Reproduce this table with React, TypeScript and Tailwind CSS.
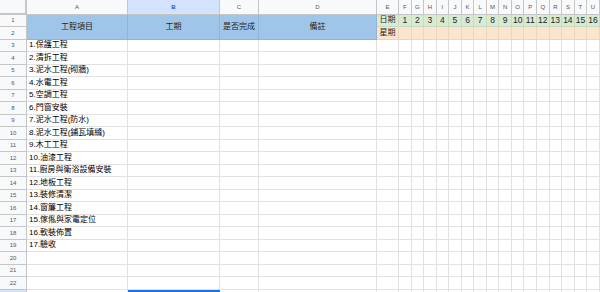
import React from "react";

const items = [
  "1.保護工程",
  "2.清拆工程",
  "3.泥水工程(砌牆)",
  "4.水電工程",
  "5.空調工程",
  "6.門窗安裝",
  "7.泥水工程(防水)",
  "8.泥水工程(鋪瓦填縫)",
  "9.木工工程",
  "10.油漆工程",
  "11.廚房與衛浴設備安裝",
  "12.地板工程",
  "13.裝修清潔",
  "14.窗簾工程",
  "15.傢俬與家電定位",
  "16.軟裝佈置",
  "17.驗收",
];

const dayCols = ["F", "G", "H", "I", "J", "K", "L", "M", "N", "O", "P", "Q", "R", "S", "T", "U"];

const font = { fontFamily: '"Liberation Sans", Arial, "Noto Sans CJK TC", sans-serif' };

export default function App() {
  const rows: React.ReactNode[] = [];

  rows.push(
    <div key="corner" className="bg-[#f8f9fa] border-r-2 border-b-2 border-[#c4c7c5]" />
  );
  const colHeads = ["A", "B", "C", "D", "E", ...dayCols];
  colHeads.forEach((c) => {
    const sel = c === "B";
    rows.push(
      <div
        key={"h" + c}
        className={
          "flex items-center justify-center text-[6px] border-r border-b border-[#c4c7c5] " +
          (sel ? "bg-[#d3e3fd] text-[#0b57d0] font-bold" : "bg-[#f8f9fa] text-[#575757]")
        }
      >
        {c}
      </div>
    );
  });

  rows.push(
    <div key="r1" className="flex items-center justify-center text-[6px] text-[#575757] bg-[#f8f9fa] border-r border-b border-[#c4c7c5]">1</div>
  );
  const blueCell =
    "row-span-2 flex items-center justify-center bg-[#9fc5e8] text-[8px] text-[#1f1f1f] border-r border-b border-[#8fb4d8]";
  rows.push(<div key="a1" className={blueCell}>工程項目</div>);
  rows.push(<div key="b1" className={blueCell}>工期</div>);
  rows.push(<div key="c1" className={blueCell}>是否完成</div>);
  rows.push(<div key="d1" className={blueCell}>備註</div>);
  rows.push(
    <div key="e1" className="flex items-center justify-center bg-[#d9ead3] text-[8px] text-[#1f1f1f] border-r border-b border-[#c9dcc2]">日期</div>
  );
  dayCols.forEach((c, i) => {
    rows.push(
      <div key={"d" + c} className="flex items-center justify-center bg-[#d9ead3] text-[8.5px] text-[#1f1f1f] border-r border-b border-[#c9dcc2]">
        {i + 1}
      </div>
    );
  });

  rows.push(
    <div key="r2" className="flex items-center justify-center text-[6px] text-[#575757] bg-[#f8f9fa] border-r border-b border-[#c4c7c5]">2</div>
  );
  rows.push(
    <div key="e2" className="flex items-center justify-center bg-[#fce5cd] text-[8px] text-[#1f1f1f] border-r border-b border-[#ecd4bb]">星期</div>
  );
  dayCols.forEach((c) => {
    rows.push(<div key={"w" + c} className="bg-[#fce5cd] border-r border-b border-[#ecd4bb]" />);
  });

  for (let r = 3; r <= 23; r++) {
    const sel = r === 23;
    rows.push(
      <div
        key={"rn" + r}
        className={
          "flex items-center justify-center text-[6px] border-r border-b border-[#c4c7c5] " +
          (sel ? "bg-[#d3e3fd] text-[#0b57d0]" : "bg-[#f8f9fa] text-[#575757]")
        }
      >
        {sel ? "" : r}
      </div>
    );
    const text = items[r - 3] ?? "";
    rows.push(
      <div key={"a" + r} className="flex items-center pl-[2px] text-[8px] text-black border-r border-b border-[#e1e1e1] whitespace-nowrap overflow-hidden">
        {text}
      </div>
    );
    rows.push(
      <div
        key={"b" + r}
        className={sel ? "border-2 border-[#1a73e8]" : "border-r border-b border-[#e1e1e1]"}
      />
    );
    rows.push(<div key={"c" + r} className="border-r border-b border-[#e1e1e1]" />);
    rows.push(<div key={"dd" + r} className="border-r border-b border-[#e1e1e1]" />);
    rows.push(<div key={"e" + r} className="border-r border-b border-[#e1e1e1]" />);
    dayCols.forEach((c) => {
      rows.push(<div key={c + r} className="border-r border-b border-[#e1e1e1]" />);
    });
  }

  return (
    <div className="w-[600px] h-[292px] overflow-hidden bg-white" style={font}>
      <div className="grid grid-cols-[27px_101px_92px_39px_118px_22px_repeat(16,12.56px)] grid-rows-[14.5px_repeat(23,12.5px)] leading-none">
        {rows}
      </div>
    </div>
  );
}
